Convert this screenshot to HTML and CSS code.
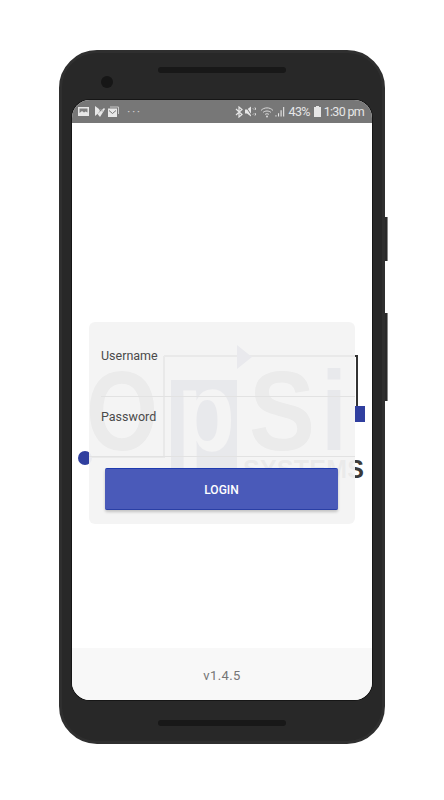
FILE: index.html
```html
<!DOCTYPE html>
<html>
<head>
    <link rel="stylesheet" href="styles.css">
</head>
<body>
    <div class="phone">
        <div class="side-key side-key-top"></div>
        <div class="side-key side-key-bottom"></div>
        <div class="top-bezel">
            <div class="camera"></div>
            <div class="speaker"></div>
        </div>
        <div class="screen">
            <div class="status-bar">
                <div class="status-left">
                    <svg class="status-icon" viewBox="0 0 11 11"><path fill="#e8e8e8" d="M0 1h11v9H0z"/><path fill="#808080" d="M1.500 2.500h8v4l-2-1-1.500 1-2-1.500-2.500 2z"/></svg>
                    <svg class="status-icon icon-gap" viewBox="0 0 11 11"><path fill="#e8e8e8" d="M1 0l4 3 1 2-2 2.500L1 10z"/><path fill="#e8e8e8" d="M3.500 8L10 2l1 1-5 8z"/><path fill="#bbb" d="M6 3l4 2-2 1z"/></svg>
                    <svg class="status-icon" viewBox="0 0 11 11"><path fill="#e8e8e8" d="M0 2.500h9V11H0z"/><path fill="none" stroke="#777" d="M1 4.500l3.500 3 3.500-3"/><path fill="none" stroke="#c8c8c8" d="M2 1h8.500v7"/></svg>
                    <span class="dots">&middot;&middot;&middot;</span>
                </div>
                <div class="status-right">
                    <svg class="icon-bt" viewBox="0 0 8 12"><path fill="none" stroke="#e6e6e6" stroke-width="1.200" d="M1 3l6 5.500L4 11V1l3 2.500L1 9"/></svg>
                    <svg class="icon-mute" viewBox="0 0 11 11"><path fill="#e6e6e6" d="M0 3.500h2L6 .5v10l-4-3H0z"/><path stroke="#777" d="M1 1l6 9"/><path stroke="#e6e6e6" d="M8 2.500l1 1M10 1.500l1 2.500M8 8.500l1-1M10 9.500l1-2.500"/></svg>
                    <svg class="icon-wifi" viewBox="0 0 14 12"><path fill="none" stroke="#d8d8d8" d="M1 4.500c3-3.500 9-3.500 12 0M3 6.500c2-2 6-2 8 0M5 8.500c1-1 3-1 4 0"/><circle cx="7" cy="10.500" r="1" fill="#d8d8d8"/></svg>
                    <svg class="icon-signal" viewBox="0 0 10 12"><path fill="#e6e6e6" d="M0 10h1.200v1.500H0zM2.800 8H4v3.500H2.800zM5.600 4.500h1.200v7H5.600zM8.400 1h1.200v10.500H8.400z"/></svg>
                    <span class="status-text">43%</span>
                    <svg class="icon-battery" viewBox="0 0 7 11"><path fill="#e6e6e6" d="M2 0h3v1h2v10H0V1h2z"/></svg>
                    <span class="status-text">1:30 pm</span>
                </div>
            </div>

            <div class="content">
                <svg class="logo" viewBox="0 0 288 140">
                    <g fill="none" stroke="#333" stroke-width="2">
                        <path d="M87 11H280V62"/>
                        <path d="M87 11V112H8"/>
                    </g>
                    <path fill="#2a3070" d="M160 0l15 12-15 12z"/>
                    <rect x="94" y="35" width="66" height="90" fill="#1f2668"/>
                    <text class="logo-letters" x="9" y="105" textLength="72" lengthAdjust="spacingAndGlyphs">O</text>
                    <text class="logo-letters logo-p" x="100" y="105" textLength="58" lengthAdjust="spacingAndGlyphs">p</text>
                    <text class="logo-letters" x="172" y="105" textLength="66" lengthAdjust="spacingAndGlyphs">S</text>
                    <text class="logo-letters logo-i" x="244" y="105" textLength="26" lengthAdjust="spacingAndGlyphs">i</text>
                    <text class="logo-systems" x="166" y="133" textLength="121">SYSTEMS</text>
                    <rect x="278" y="61" width="10" height="16" fill="#303f9f"/>
                    <circle cx="8" cy="113" r="7" fill="#303f9f"/>
                </svg>

                <div class="login-card">
                    <div class="input-group">
                        <span class="input-label">Username</span>
                    </div>
                    <div class="input-group input-group-password">
                        <span class="input-label">Password</span>
                    </div>
                    <button class="login-btn">LOGIN</button>
                </div>
            </div>

            <div class="footer">v1.4.5</div>
        </div>
        <div class="bottom-bezel">
            <div class="speaker"></div>
        </div>
    </div>
</body>
</html>
```

FILE: styles.css
```css
* {
    box-sizing: border-box;
}
body {
    margin: 0;
    height: 800px;
    background-color: #fff;
    font-family: Roboto, sans-serif;
    overflow: hidden;
    padding: 50px 0 0 59px;
}
.phone {
    position: relative;
    width: 326px;
    height: 694px;
    background-color: #282828;
    border: 3px solid #2f2f2f;
    border-radius: 38px;
    display: flex;
    flex-direction: column;
    align-items: center;
}
.side-key {
    position: absolute;
    left: 323px;
    width: 3px;
    background-color: #2a2a2a;
    border-right: 1px solid #888;
}
.side-key-top {
    top: 164px;
    height: 44px;
}
.side-key-bottom {
    top: 260px;
    height: 88px;
}
.top-bezel {
    position: relative;
    width: 100%;
    height: 47px;
    flex-shrink: 0;
    display: flex;
    justify-content: center;
    padding-top: 14px;
}
.camera {
    position: absolute;
    left: 39px;
    top: 23px;
    width: 12px;
    height: 12px;
    border-radius: 50%;
    background-color: #161616;
}
.speaker {
    width: 128px;
    height: 6px;
    border-radius: 3px;
    background-color: #181818;
}
.bottom-bezel {
    flex: 1;
    width: 100%;
    display: flex;
    justify-content: center;
    padding-top: 20px;
}
.screen {
    width: 300px;
    height: 600px;
    flex-shrink: 0;
    background-color: #fff;
    border-radius: 18px;
    box-shadow: 0 0 0 1px #161616;
    overflow: hidden;
    display: flex;
    flex-direction: column;
}
.status-bar {
    height: 23px;
    flex-shrink: 0;
    background-color: #777;
    display: flex;
    justify-content: space-between;
    align-items: center;
    padding: 0 8px 0 6px;
}
.status-left,
.status-right {
    display: flex;
    align-items: center;
}
.status-left {
    gap: 3px;
}
.status-icon {
    width: 11px;
    height: 11px;
}
.icon-gap {
    margin-left: 2px;
}
.dots {
    margin-left: 5px;
    font-size: 13px;
    letter-spacing: 1.500px;
    color: #ccc;
}
.icon-bt {
    width: 8px;
    height: 12px;
    margin-right: 2px;
}
.icon-mute {
    width: 11px;
    height: 11px;
    margin-right: 4px;
}
.icon-wifi {
    width: 14px;
    height: 12px;
    margin-right: 1px;
}
.icon-signal {
    width: 10px;
    height: 11px;
    margin-right: 4px;
}
.icon-battery {
    width: 7px;
    height: 11px;
    margin: 0 3px 0 4px;
}
.status-text {
    font-size: 12.500px;
    letter-spacing: -0.700px;
    color: #e6e6e6;
}
.content {
    position: relative;
    flex: 1;
    display: flex;
    justify-content: center;
    padding-top: 199px;
}
.logo {
    position: absolute;
    left: 5px;
    top: 222px;
    width: 288px;
    height: 140px;
}
.logo-letters {
    font-family: "Liberation Sans", sans-serif;
    font-weight: bold;
    font-size: 113px;
    fill: #4a4a4a;
}
.logo-p {
    fill: #f0f0f0;
}
.logo-i {
    fill: #1f2668;
}
.logo-systems {
    font-family: "Liberation Sans", sans-serif;
    font-weight: bold;
    font-size: 25px;
    fill: #3a3a3a;
}
.login-card {
    position: relative;
    width: 266px;
    height: 202px;
    background-color: rgba(243, 243, 243, 0.95);
    border-radius: 6px;
    padding-top: 23px;
}
.input-group {
    margin-left: 12px;
    height: 52px;
    border-bottom: 1px solid #e2e2e2;
}
.input-group-password {
    margin-left: 0;
    height: 60px;
    padding: 9px 0 0 12px;
}
.input-label {
    font-size: 12.500px;
    line-height: 22px;
    color: #4a4a4a;
}
.login-btn {
    display: block;
    width: 233px;
    height: 42px;
    margin: 11px 0 0 16px;
    padding: 2px 0 0;
    background-color: #4a5ab9;
    color: #fff;
    border: none;
    border-top: 1px solid #1f3bb0;
    border-bottom: 1px solid #2a3fa5;
    border-radius: 2px;
    box-shadow: 0 2px 3px rgba(0,0,0,0.2);
    font-family: Roboto, sans-serif;
    font-size: 12px;
    font-weight: 500;
}
.footer {
    height: 52px;
    flex-shrink: 0;
    padding-top: 3px;
    background-color: #f8f8f8;
    color: #757575;
    font-size: 13px;
    letter-spacing: 0.400px;
    display: flex;
    align-items: center;
    justify-content: center;
}
```
